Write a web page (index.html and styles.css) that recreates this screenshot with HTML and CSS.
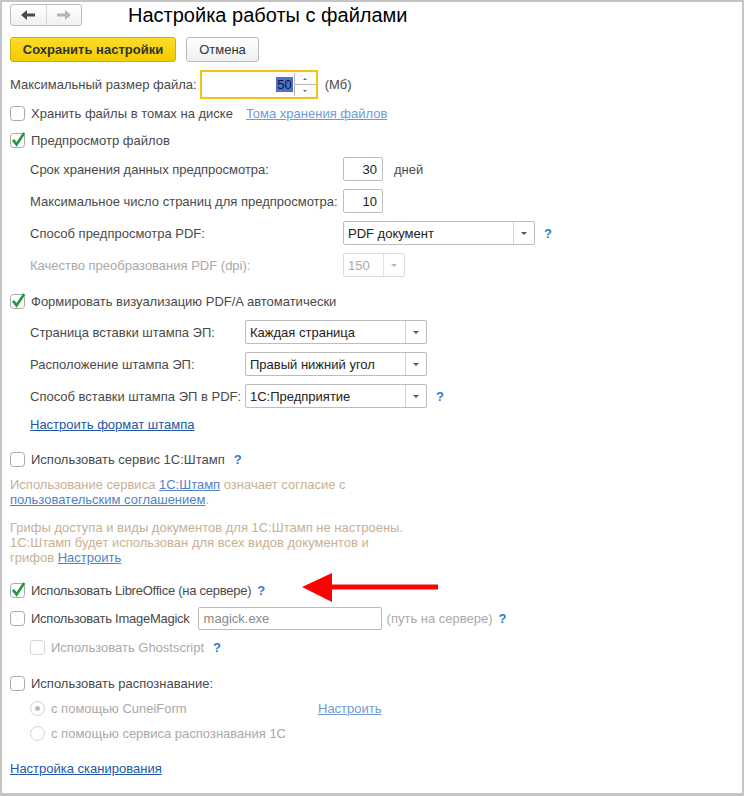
FILE: index.html
```html
<!DOCTYPE html>
<html>
<head>
  <meta charset="utf-8">
  <title>Настройка работы с файлами</title>
  <link rel="stylesheet" href="styles.css">
</head>

<body>
  <div class="window">
    <div class="head">
      <div class="nav">
        <span class="navBtn">
          <svg width="14" height="10" viewBox="0 0 14 10"><path d="M0 5 L6 0 L6 3.5 L14 3.5 L14 6.5 L6 6.5 L6 10 Z" fill="#4a4a4a"/></svg>
        </span>
        <span class="navBtn">
          <svg width="14" height="10" viewBox="0 0 14 10"><path d="M14 5 L8 0 L8 3.5 L0 3.5 L0 6.5 L8 6.5 L8 10 Z" fill="#b4b4b4"/></svg>
        </span>
      </div>
      <h1 class="title">Настройка работы с файлами</h1>
    </div>

    <div class="toolbar">
      <button class="btn btnMain">Сохранить настройки</button>
      <button class="btn">Отмена</button>
    </div>

    <div class="sizeRow">
      <span>Максимальный размер файла:</span>
      <div class="spin">
        <span class="spinVal"><span class="selected">50</span></span>
        <span class="spinArrows">
          <span class="spinUp"></span>
          <span class="spinDown"></span>
        </span>
      </div>
      <span class="unit">(Мб)</span>
    </div>

    <div class="row storeRow">
      <svg class="cb" width="15" height="15" viewBox="0 0 15 15"><rect x="0.5" y="0.5" width="14" height="14" rx="3" fill="#fff" stroke="#a8a8a8"/></svg>
      <span class="cbText">Хранить файлы в томах на диске</span>
      <a class="link linkLight storeLink">Тома хранения файлов</a>
    </div>

    <div class="row previewRow">
      <svg class="cb" width="15" height="15" viewBox="0 0 15 15"><rect x="0.5" y="0.5" width="14" height="14" rx="3" fill="#fff" stroke="#a8a8a8"/><path d="M3 6.8 L6.6 11.4 L14.2 0" fill="none" stroke="#23983c" stroke-width="2.7"/></svg>
      <span class="cbText">Предпросмотр файлов</span>
    </div>

    <div class="grid previewGrid">
      <span>Срок хранения данных предпросмотра:</span>
      <div class="cell">
        <span class="field num">30</span>
        <span class="suffix">дней</span>
      </div>

      <span>Максимальное число страниц для предпросмотра:</span>
      <div class="cell">
        <span class="field num">10</span>
      </div>

      <span>Способ предпросмотра PDF:</span>
      <div class="cell">
        <div class="select selectPdf">
          <span class="selectVal">PDF документ</span>
          <span class="selectBtn"><i class="tri"></i></span>
        </div>
        <span class="help">?</span>
      </div>

      <span class="disabled">Качество преобразования PDF (dpi):</span>
      <div class="cell">
        <div class="select selectDpi off">
          <span class="selectVal">150</span>
          <span class="selectBtn"><i class="tri"></i></span>
        </div>
      </div>
    </div>

    <div class="row pdfaRow">
      <svg class="cb" width="15" height="15" viewBox="0 0 15 15"><rect x="0.5" y="0.5" width="14" height="14" rx="3" fill="#fff" stroke="#a8a8a8"/><path d="M3 6.8 L6.6 11.4 L14.2 0" fill="none" stroke="#23983c" stroke-width="2.7"/></svg>
      <span class="cbText">Формировать визуализацию PDF/A автоматически</span>
    </div>

    <div class="grid stampGrid">
      <span>Страница вставки штампа ЭП:</span>
      <div class="cell">
        <div class="select selectStamp">
          <span class="selectVal">Каждая страница</span>
          <span class="selectBtn"><i class="tri"></i></span>
        </div>
      </div>

      <span>Расположение штампа ЭП:</span>
      <div class="cell">
        <div class="select selectStamp">
          <span class="selectVal">Правый нижний угол</span>
          <span class="selectBtn"><i class="tri"></i></span>
        </div>
      </div>

      <span>Способ вставки штампа ЭП в PDF:</span>
      <div class="cell">
        <div class="select selectStamp">
          <span class="selectVal">1С:Предприятие</span>
          <span class="selectBtn"><i class="tri"></i></span>
        </div>
        <span class="help">?</span>
      </div>
    </div>

    <div class="linkRow stampLinkRow">
      <a class="link">Настроить формат штампа</a>
    </div>

    <div class="row stampRow">
      <svg class="cb" width="15" height="15" viewBox="0 0 15 15"><rect x="0.5" y="0.5" width="14" height="14" rx="3" fill="#fff" stroke="#a8a8a8"/></svg>
      <span class="cbText">Использовать сервис 1С:Штамп</span>
      <span class="help">?</span>
    </div>

    <p class="info info1">Использование сервиса <a class="link linkInfo">1С:Штамп</a> означает согласие с<br><a class="link linkInfo">пользовательским соглашением</a>.</p>

    <p class="info info2">Грифы доступа и виды документов для 1С:Штамп не настроены.<br>1С:Штамп будет использован для всех видов документов и<br>грифов <a class="link linkInfo">Настроить</a></p>

    <div class="row libreRow">
      <svg class="cb" width="15" height="15" viewBox="0 0 15 15"><rect x="0.5" y="0.5" width="14" height="14" rx="3" fill="#fff" stroke="#a8a8a8"/><path d="M3 6.8 L6.6 11.4 L14.2 0" fill="none" stroke="#23983c" stroke-width="2.7"/></svg>
      <span class="cbText narrow">Использовать LibreOffice (на сервере)</span>
      <span class="help helpNear">?</span>
    </div>

    <div class="row magickRow">
      <svg class="cb" width="15" height="15" viewBox="0 0 15 15"><rect x="0.5" y="0.5" width="14" height="14" rx="3" fill="#fff" stroke="#a8a8a8"/></svg>
      <span class="cbText narrow">Использовать ImageMagick</span>
      <span class="field pathField">magick.exe</span>
      <span class="disabled pathNote">(путь на сервере)</span>
      <span class="help helpNear">?</span>
    </div>

    <div class="row ghostRow">
      <svg class="cb" width="15" height="15" viewBox="0 0 15 15"><rect x="0.5" y="0.5" width="14" height="14" rx="3" fill="#fff" stroke="#d4d4d4"/></svg>
      <span class="cbText disabled">Использовать Ghostscript</span>
      <span class="help">?</span>
    </div>

    <div class="row recogRow">
      <svg class="cb" width="15" height="15" viewBox="0 0 15 15"><rect x="0.5" y="0.5" width="14" height="14" rx="3" fill="#fff" stroke="#a8a8a8"/></svg>
      <span class="cbText">Использовать распознавание:</span>
    </div>

    <div class="row radioRow radioFirst">
      <svg class="rb" width="15" height="15" viewBox="0 0 15 15"><circle cx="7.5" cy="7.5" r="7" fill="#fff" stroke="#d2d2d2"/><circle cx="7.5" cy="7.5" r="2.5" fill="#bdbdbd"/></svg>
      <span class="cbText disabled radioText">с помощью CuneiForm</span>
      <a class="link linkLight">Настроить</a>
    </div>

    <div class="row radioRow">
      <svg class="rb" width="15" height="15" viewBox="0 0 15 15"><circle cx="7.5" cy="7.5" r="7" fill="#fff" stroke="#d2d2d2"/></svg>
      <span class="cbText disabled">с помощью сервиса распознавания 1С</span>
    </div>

    <div class="linkRow scanRow">
      <a class="link">Настройка сканирования</a>
    </div>

    <!-- red pointer drawn over the form -->
    <svg class="pointer" width="140" height="32" viewBox="0 0 140 32">
      <path d="M2 16 L32 2 L32 13.5 L138 13.5 L138 18.5 L32 18.5 L32 31 Z" fill="#ff0000"/>
    </svg>
  </div>
</body>
</html>
```

FILE: styles.css
```css
* {box-sizing: border-box;}
body {margin: 0; font-family: "Liberation Sans", Arial, sans-serif; font-size: 13px; color: #4a4a4a; background: #fff;}

.window {position: relative; width: 744px; height: 796px; border: 2px solid #c4c4c4; border-bottom-width: 3px; padding: 2px 8px 0 8px; background: #fff;}

/* header */
.head {display: flex; align-items: center; height: 22px;}
.nav {display: flex; width: 72px; height: 22px; border: 1px solid #bdbdbd; border-radius: 3px; background: linear-gradient(#ffffff, #f1f1f1);}
.navBtn {flex: 1; display: flex; align-items: center; justify-content: center;}
.navBtn + .navBtn {border-left: 1px solid #d6d6d6;}
.title {margin: 0 0 0 46px; font-size: 20px; font-weight: normal; color: #000; line-height: 22px;}

.toolbar {display: flex; gap: 10px; margin-top: 11px; height: 25px;}
.btn {height: 25px; padding: 0; white-space: nowrap; font-family: inherit; font-size: 13px; color: #333; border: 1px solid #bcbcbc; border-radius: 3px; background: linear-gradient(#ffffff, #efefef);}
.btnMain {width: 166px; font-weight: bold; border-color: #d2b000; background: linear-gradient(#fbdc2a, #f2cc00);}
.btn:not(.btnMain) {width: 73px;}

/* spin field */
.sizeRow {display: flex; align-items: center; height: 29px; margin-top: 8px;}
.spin {display: flex; width: 118px; height: 29px; margin-left: 3px; border: 2px solid #f3c416; background: #fff;}
.spinVal {flex: 1; display: flex; align-items: center; justify-content: flex-end; padding-right: 1px; color: #222;}
.selected {background: #4b72cf; color: #101436; padding: 0 1px;}
.spinArrows {width: 22px; display: flex; flex-direction: column; border-left: 1px solid #b8b8b8; margin: 1px 0;}
.spinUp, .spinDown {flex: 1; position: relative;}
.spinUp {border-bottom: 1px solid #b8b8b8;}
.spinUp::after, .spinDown::after {content: ""; position: absolute; left: 8px; border-left: 2px solid transparent; border-right: 2px solid transparent;}
.spinUp::after {top: 5px; border-bottom: 2px solid #666;}
.spinDown::after {top: 5px; border-top: 2px solid #666;}
.unit {margin-left: 7px;}

/* rows */
.row {display: flex; align-items: center; height: 24px;}
.cb, .rb {flex: none; overflow: visible;}
.cbText {margin-left: 6px;}
.narrow {letter-spacing: -0.25px;}
.storeRow {margin-top: 2px;}
.storeLink {margin-left: 13px;}
.previewRow {margin-top: 3px;}
.pdfaRow {margin-top: 12px;}
.stampRow {margin-top: 15px;}
.libreRow {margin-top: 13px;}
.magickRow {margin-top: 4px;}
.ghostRow {margin-top: 5px; padding-left: 20px;}
.recogRow {margin-top: 12px;}
.radioRow {margin-top: 1px; padding-left: 20px;}
.radioText {width: 267px;}

.grid {display: grid; grid-auto-rows: 24px; row-gap: 8px; align-items: center; padding-left: 20px;}
.previewGrid {grid-template-columns: 313px auto; margin-top: 5px;}
.stampGrid {grid-template-columns: 215px auto; margin-top: 7px;}
.cell {display: flex; align-items: center; height: 24px;}

.field {display: flex; align-items: center; height: 24px; border: 1px solid #bcbcbc; border-radius: 2px; background: #fff; padding: 0 5px; color: #222;}
.num {width: 40px; justify-content: flex-end;}
.suffix {margin-left: 11px;}

.select {display: flex; height: 24px; border: 1px solid #bcbcbc; border-radius: 2px; background: #fff; color: #222;}
.selectVal {flex: 1; display: flex; align-items: center; padding-left: 4px;}
.selectBtn {width: 21px; display: flex; align-items: center; justify-content: center; border-left: 1px solid #d4d4d4;}
.tri {width: 0; height: 0; border-left: 3px solid transparent; border-right: 3px solid transparent; border-top: 3px solid #555;}
.selectPdf {width: 192px;}
.selectDpi {width: 62px;}
.selectStamp {width: 182px;}
.off {border-color: #dcdcdc; color: #a8a8a8;}
.off .selectBtn {border-left-color: #e4e4e4;}
.off .tri {border-top-color: #b8b8b8;}

.help {margin-left: 9px; color: #2f7ad0; font-weight: bold;}
.helpNear {margin-left: 6px;}

.pathField {width: 184px; height: 23px; margin-left: 8px; color: #8a8a8a; letter-spacing: 0;}
.pathNote {margin-left: 5px;}

.disabled {color: #a9a9a9;}

/* links and notes */
.link {color: #2157a8; text-decoration: underline;}
.linkLight {color: #6e9bd6;}
.linkInfo {color: #4f82c9;}
.linkRow {height: 16px; display: flex; align-items: center;}
.stampLinkRow {margin-top: 8px; padding-left: 20px;}
.scanRow {margin-top: 15px;}

.info {margin: 0; line-height: 15px; color: #c7b193;}
.info1 {margin-top: 6px;}
.info2 {margin-top: 13px;}

.pointer {position: absolute; left: 298px; top: 569px;}
```
